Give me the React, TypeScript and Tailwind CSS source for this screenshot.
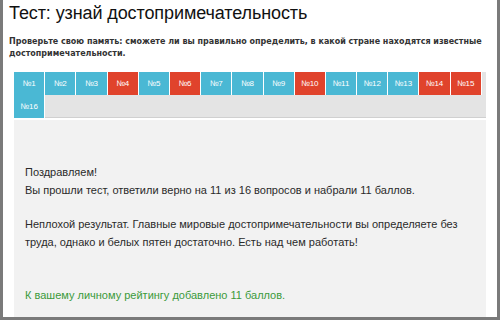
import React from "react";

const tabs: { n: number; ok: boolean }[] = [
  { n: 1, ok: true },
  { n: 2, ok: true },
  { n: 3, ok: true },
  { n: 4, ok: false },
  { n: 5, ok: true },
  { n: 6, ok: false },
  { n: 7, ok: true },
  { n: 8, ok: true },
  { n: 9, ok: true },
  { n: 10, ok: false },
  { n: 11, ok: true },
  { n: 12, ok: true },
  { n: 13, ok: true },
  { n: 14, ok: false },
  { n: 15, ok: false },
  { n: 16, ok: true },
];

export default function App() {
  return (
    <div className="w-[500px] h-[320px] bg-white border-x-[3px] border-b-[3px] border-[#7a7a7a] overflow-hidden flex flex-col">
      <div className="pl-[6px] pr-[8px]">
        <h1
          className="text-[18px] leading-[24px] text-[#111] pt-[1px] tracking-[-0.1px]"
          style={{ fontFamily: '"Liberation Sans", Arial, sans-serif' }}
        >
          Тест: узнай достопримечательность
        </h1>
        <p
          className="mt-[11px] text-[8px] leading-[12px] font-bold text-[#333]"
          style={{ fontFamily: '"DejaVu Sans", Verdana, sans-serif' }}
        >
          Проверьте свою память: сможете ли вы правильно определить, в какой стране находятся известные
          достопримечательности.
        </p>
      </div>
      <div className="ml-[11px] w-[472px] mt-[12px] flex flex-col">
        <div className="bg-[#e4e4e4] flex flex-wrap h-[46px] border-b border-[#d0d0d0]">
          {tabs.map((t) => (
            <div
              key={t.n}
              className={`w-[31.2px] h-[23px] border-r border-white flex items-center justify-center text-[8px] text-white ${
                t.ok ? "bg-[#4ab8d4]" : "bg-[#e0432c]"
              }`}
              style={{ fontFamily: '"Liberation Sans", Arial, sans-serif' }}
            >
              №{t.n}
            </div>
          ))}
        </div>
        <div
          className="mt-[2px] bg-[#f2f2f2] h-[200px] pl-[11px] pt-[43px] text-[11px] leading-[18px] text-[#2a2a2a] whitespace-nowrap"
          style={{ fontFamily: '"Liberation Sans", Arial, sans-serif' }}
        >
          <p>Поздравляем!</p>
          <p>Вы прошли тест, ответили верно на 11 из 16 вопросов и набрали 11 баллов.</p>
          <p className="mt-[16px]">
            Неплохой результат. Главные мировые достопримечательности вы определяете без
            <br />
            труда, однако и белых пятен достаточно. Есть над чем работать!
          </p>
          <p className="mt-[35px] text-[#3b9a3b]">К вашему личному рейтингу добавлено 11 баллов.</p>
        </div>
      </div>
    </div>
  );
}
